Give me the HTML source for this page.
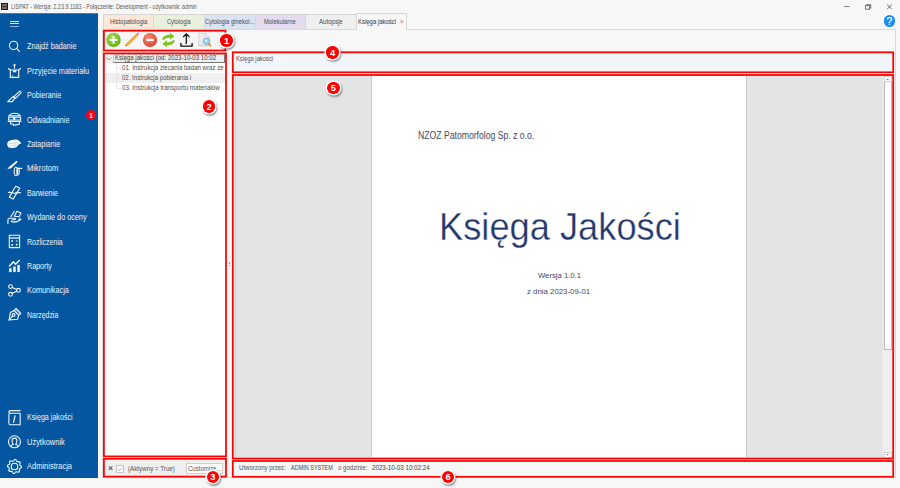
<!DOCTYPE html>
<html><head><meta charset="utf-8">
<style>
*{margin:0;padding:0;box-sizing:border-box}
html,body{width:900px;height:488px;overflow:hidden;background:#f7f7f7;position:relative;font-family:"Liberation Sans",sans-serif}
.r{position:absolute}
.t{position:absolute;white-space:nowrap;transform-origin:0 0}
.bd{border-radius:50%;background:#f00;box-shadow:0 0 0 1.6px #fff,0.9px 1.4px 2px 1.4px rgba(0,0,0,.45)}
</style></head><body>
<div class="r" style="left:0;top:0;width:900px;height:13px;background:#f7f7f7"></div>
<div class="r" style="left:1px;top:3px;width:7px;height:7px;background:#1c1c1c"></div>
<div class="r" style="left:2px;top:4px;width:5px;height:2px;background:#8a8a8a;opacity:.75"></div>
<div class="r" style="left:2px;top:6px;width:5px;height:1px;background:#4a3a20"></div>
<div class="r" style="left:2px;top:7px;width:5px;height:2px;background:#8a8a8a;opacity:.75"></div>
<div class="t" style="left:11px;top:2.54px;font-size:6.8px;line-height:8px;color:#5a5a5a;font-weight:normal;transform:scaleX(0.7970);">LISPAT - Wersja: 2.23.9.1183 - Połączenie: Development - użytkownik: admin</div>
<svg class="r" style="left:840px;top:0" width="60" height="14"><line x1="4" y1="6.5" x2="9.5" y2="6.5" stroke="#777" stroke-width="0.9"/><rect x="25.6" y="5.6" width="3.9" height="3.6" fill="none" stroke="#666" stroke-width="0.9"/><path d="M26.8 5.6V4.6h4v3.6h-1.3" fill="none" stroke="#666" stroke-width="0.9"/><path d="M47.2 4.5l4.6 4.6M51.8 4.5l-4.6 4.6" stroke="#555" stroke-width="0.9"/></svg>
<div class="r" style="left:0;top:13px;width:98px;height:465px;background:#03569f"></div>
<div class="r" style="left:0;top:13px;width:98px;height:1px;background:#3d7fba"></div>
<div class="r" style="left:10px;top:21px;width:9px;height:1px;background:#dbe7f3"></div>
<div class="r" style="left:10px;top:23px;width:9px;height:1px;background:#dbe7f3"></div>
<div class="r" style="left:10px;top:26px;width:9px;height:1px;background:#8db3d9"></div>
<div class="t" style="left:27px;top:41.22px;font-size:8.3px;line-height:10px;color:#eef3f9;font-weight:normal;transform:scaleX(0.8723);">Znajdź badanie</div>
<div class="t" style="left:27px;top:66.02px;font-size:8.3px;line-height:10px;color:#eef3f9;font-weight:normal;transform:scaleX(0.8844);">Przyjęcie materiału</div>
<div class="t" style="left:27px;top:90.12px;font-size:8.3px;line-height:10px;color:#eef3f9;font-weight:normal;transform:scaleX(0.8609);">Pobieranie</div>
<div class="t" style="left:27px;top:114.72px;font-size:8.3px;line-height:10px;color:#eef3f9;font-weight:normal;transform:scaleX(0.8759);">Odwadnianie</div>
<div class="t" style="left:27px;top:139.12px;font-size:8.3px;line-height:10px;color:#eef3f9;font-weight:normal;transform:scaleX(0.8573);">Zatapianie</div>
<div class="t" style="left:27px;top:163.42px;font-size:8.3px;line-height:10px;color:#eef3f9;font-weight:normal;transform:scaleX(0.9184);">Mikrotom</div>
<div class="t" style="left:27px;top:187.92px;font-size:8.3px;line-height:10px;color:#eef3f9;font-weight:normal;transform:scaleX(0.8514);">Barwienie</div>
<div class="t" style="left:27px;top:212.12px;font-size:8.3px;line-height:10px;color:#eef3f9;font-weight:normal;transform:scaleX(0.8727);">Wydanie do oceny</div>
<div class="t" style="left:27px;top:236.72px;font-size:8.3px;line-height:10px;color:#eef3f9;font-weight:normal;transform:scaleX(0.8424);">Rozliczenia</div>
<div class="t" style="left:27px;top:260.92px;font-size:8.3px;line-height:10px;color:#eef3f9;font-weight:normal;transform:scaleX(0.8580);">Raporty</div>
<div class="t" style="left:27px;top:285.22px;font-size:8.3px;line-height:10px;color:#eef3f9;font-weight:normal;transform:scaleX(0.8818);">Komunikacja</div>
<div class="t" style="left:27px;top:309.72px;font-size:8.3px;line-height:10px;color:#eef3f9;font-weight:normal;transform:scaleX(0.8375);">Narzędzia</div>
<div class="t" style="left:27px;top:412.32px;font-size:8.3px;line-height:10px;color:#eef3f9;font-weight:normal;transform:scaleX(0.8604);">Księga jakości</div>
<div class="t" style="left:27px;top:436.72px;font-size:8.3px;line-height:10px;color:#eef3f9;font-weight:normal;transform:scaleX(0.9005);">Użytkownik</div>
<div class="t" style="left:27px;top:461.12px;font-size:8.3px;line-height:10px;color:#eef3f9;font-weight:normal;transform:scaleX(0.9044);">Administracja</div>
<svg class="r" style="left:0;top:0" width="98" height="488"><circle cx="13.6" cy="45.4" r="4.1" fill="none" stroke="#f2f6fa" stroke-width="1.1" stroke-linecap="round" stroke-linejoin="round"/><path d="M16.6 48.4l2.9 3" fill="none" stroke="#f2f6fa" stroke-width="1.1" stroke-linecap="round" stroke-linejoin="round"/><path d="M14.5 68.3v-3.5" fill="none" stroke="#f2f6fa" stroke-width="1.1" stroke-linecap="round" stroke-linejoin="round"/><path d="M12.8 65.6l1.7-2.2 1.7 2.2z" fill="#f2f6fa"/><rect x="10.3" y="70" width="8.4" height="7.4" fill="none" stroke="#f2f6fa" stroke-width="1.1" stroke-linecap="round" stroke-linejoin="round"/><path d="M10.3 70l-1.9-1.5M18.7 70l1.9-1.5" fill="none" stroke="#f2f6fa" stroke-width="1.1" stroke-linecap="round" stroke-linejoin="round"/><rect x="13" y="70.3" width="3.3" height="2" fill="#f2f6fa"/><path d="M12.4 75v1.5" stroke="#f2f6fa" stroke-width="0.7"/><path d="M7.7 101.6l5.6-5.3 1.6 1.6-2.6 3.7z" fill="none" stroke="#f2f6fa" stroke-width="1.1" stroke-linecap="round" stroke-linejoin="round"/><path d="M13.8 96.8l5.4-5.2a1.15 1.15 0 0 1 1.6 1.6l-5.4 5.2z" fill="none" stroke="#f2f6fa" stroke-width="1.1" stroke-linecap="round" stroke-linejoin="round"/><path d="M8.6 115.8h12M9.6 115.5c.3-1.5 1.5-2.2 5-2.2s4.7.7 5 2.2" fill="none" stroke="#f2f6fa" stroke-width="1.1" stroke-linecap="round" stroke-linejoin="round"/><rect x="8.6" y="117.1" width="12" height="2.9" fill="none" stroke="#f2f6fa" stroke-width="1.1" stroke-linecap="round" stroke-linejoin="round"/><rect x="13" y="117.3" width="2.4" height="2.5" fill="#f2f6fa"/><path d="M8.2 121.4h12.8" fill="none" stroke="#f2f6fa" stroke-width="1.1" stroke-linecap="round" stroke-linejoin="round"/><path d="M10.6 121.4v2.6h2.8v1.4l5.9-1.2v-2.8" fill="none" stroke="#f2f6fa" stroke-width="1.1" stroke-linecap="round" stroke-linejoin="round"/><path d="M7.2 143.5c.4-2.2 2.5-3.2 5-3.5l2.5-.4c2.2-.2 3.5.4 4.5 1.4l2.3 2.2-2.8 1.3c-.8 2-2.8 3.3-6 3.6-3 .3-5.7-.6-5.5-4.6z" fill="#f2f6fa"/><path d="M9 143.8c2-.4 5-.5 8.5-.8M10.5 146c2-.2 4-.6 6-1.2" stroke="#9fc0e0" stroke-width="0.5" fill="none"/><path d="M7.3 169.3l1.6-2.4 7.3-6a1 1 0 0 1 1.2 1.4l-6.3 5.9z" fill="#f2f6fa"/><ellipse cx="15.9" cy="171.5" rx="1.7" ry="4.2" fill="none" stroke="#f2f6fa" stroke-width="1.1" stroke-linecap="round" stroke-linejoin="round"/><ellipse cx="18.0" cy="171.5" rx="1.2" ry="3.5" fill="none" stroke="#f2f6fa" stroke-width="1.1" stroke-linecap="round" stroke-linejoin="round"/><path d="M18.3 168.4h3.5" fill="none" stroke="#f2f6fa" stroke-width="1.1" stroke-linecap="round" stroke-linejoin="round"/><path d="M15.7 186.3l4 1.8-6.6 11-3.8-2z" fill="none" stroke="#f2f6fa" stroke-width="1.1" stroke-linecap="round" stroke-linejoin="round"/><path d="M8.3 192.4c1.4-.8 2-.2 3.4.4 1.5.6 3 .5 4.6.1 1.5-.4 2.6-.5 4.3-.1" fill="none" stroke="#f2f6fa" stroke-width="1.1" stroke-linecap="round" stroke-linejoin="round"/><path d="M10.8 216.6l3.6-5.3" fill="none" stroke="#f2f6fa" stroke-width="1.1" stroke-linecap="round" stroke-linejoin="round"/><path d="M16.9 211.3l4 1.8-1.7 3.6-4.8-.4z" fill="none" stroke="#f2f6fa" stroke-width="1.1" stroke-linecap="round" stroke-linejoin="round"/><path d="M7.9 223.6v-3.6c0-1 .8-1.7 2-1.7h4.8c1 0 1 1.4.1 1.5h-2.5M11 221c2.5 1.8 5.3 1.3 8.5-.4l1.4-1.3c-.5-.5-1.2-.5-2 0" fill="none" stroke="#f2f6fa" stroke-width="1.1" stroke-linecap="round" stroke-linejoin="round"/><rect x="9.3" y="235.3" width="10.3" height="12.3" fill="none" stroke="#f2f6fa" stroke-width="1.1" stroke-linecap="round" stroke-linejoin="round"/><rect x="9.8" y="237.1" width="9.3" height="1.9" fill="#9fc0e0"/><circle cx="12.2" cy="241" r="0.9" fill="#f2f6fa"/><path d="M15.8 241h1.9" stroke="#f2f6fa" stroke-width="1"/><rect x="11.3" y="244.1" width="1.7" height="1.7" fill="#f2f6fa"/><path d="M16.7 243.7v2M15.7 244.7h2" stroke="#f2f6fa" stroke-width="0.9"/><rect x="9.1" y="268.2" width="2.5" height="3.9" fill="#f2f6fa"/><rect x="13.2" y="266.5" width="2.5" height="5.6" fill="#f2f6fa"/><rect x="17.3" y="264.9" width="2.5" height="7.2" fill="#f2f6fa"/><path d="M9.5 266l3.9-4.2 2.1 2.4 3.8-3.7" fill="none" stroke="#f2f6fa" stroke-width="1.5" stroke-linecap="round" stroke-linejoin="round"/><circle cx="10.5" cy="286.6" r="1.9" fill="none" stroke="#f2f6fa" stroke-width="1.1" stroke-linecap="round" stroke-linejoin="round"/><circle cx="10.5" cy="294.3" r="1.9" fill="none" stroke="#f2f6fa" stroke-width="1.1" stroke-linecap="round" stroke-linejoin="round"/><circle cx="18.4" cy="290.3" r="1.9" fill="none" stroke="#f2f6fa" stroke-width="1.1" stroke-linecap="round" stroke-linejoin="round"/><path d="M12.2 287.5l4.5 2M12.2 293.3l4.5-2.1" fill="none" stroke="#f2f6fa" stroke-width="1.1" stroke-linecap="round" stroke-linejoin="round"/><path d="M9.1 320l1.3-7.6 3.6-1.9 4.7 4.9-1.1 3.8z" fill="none" stroke="#f2f6fa" stroke-width="1.1" stroke-linecap="round" stroke-linejoin="round"/><path d="M14 310.6l2.1-2.1 4.7 4.8-2.1 2.1" fill="none" stroke="#f2f6fa" stroke-width="1.1" stroke-linecap="round" stroke-linejoin="round"/><path d="M15.2 309.5l4.6 4.8" stroke="#f2f6fa" stroke-width="0.7"/><circle cx="13.6" cy="315" r="1.4" fill="none" stroke="#f2f6fa" stroke-width="1.1" stroke-linecap="round" stroke-linejoin="round"/><path d="M9.1 320l3.4-3.9" fill="none" stroke="#f2f6fa" stroke-width="1.1" stroke-linecap="round" stroke-linejoin="round"/><path d="M20.2 413.3H10.4c-1 0-1.5.7-1.5 1.5v8.5c0 .9.6 1.5 1.5 1.5h9.8z" fill="none" stroke="#f2f6fa" stroke-width="1.1" stroke-linecap="round" stroke-linejoin="round"/><path d="M10.4 413.3c-1 0-1.5-.5-1.5-1.3s.5-1.4 1.5-1.4h9.8" fill="none" stroke="#f2f6fa" stroke-width="1.1" stroke-linecap="round" stroke-linejoin="round"/><path d="M15.1 415.8l-1.6 6.5" stroke="#f2f6fa" stroke-width="1.2" stroke-linecap="round"/><circle cx="14.5" cy="441.8" r="6" fill="none" stroke="#f2f6fa" stroke-width="1.1" stroke-linecap="round" stroke-linejoin="round"/><path d="M10.6 446.5c.6-1.6 2-1.6 2.8-2.1-1-1-1.3-2.5-1.3-3.7 0-1.6 1-2.6 2.4-2.6s2.4 1 2.4 2.6c0 1.2-.3 2.7-1.3 3.7.8.5 2.2.5 2.8 2.1" fill="none" stroke="#f2f6fa" stroke-width="1.1" stroke-linecap="round" stroke-linejoin="round"/><path d="M14.50 459.50 L15.87 459.63 L16.64 461.33 L17.61 461.84 L19.45 461.55 L20.32 462.61 L19.67 464.36 L19.99 465.41 L21.50 466.50 L21.37 467.87 L19.67 468.64 L19.16 469.61 L19.45 471.45 L18.39 472.32 L16.64 471.67 L15.59 471.99 L14.50 473.50 L13.13 473.37 L12.36 471.67 L11.39 471.16 L9.55 471.45 L8.68 470.39 L9.33 468.64 L9.01 467.59 L7.50 466.50 L7.63 465.13 L9.33 464.36 L9.84 463.39 L9.55 461.55 L10.61 460.68 L12.36 461.33 L13.41 461.01Z" fill="none" stroke="#f2f6fa" stroke-width="1.1" stroke-linecap="round" stroke-linejoin="round"/><circle cx="14.5" cy="466.5" r="3.3" fill="none" stroke="#f2f6fa" stroke-width="1.1" stroke-linecap="round" stroke-linejoin="round"/></svg>
<div class="r" style="left:85.9px;top:110.3px;width:10px;height:10px;border-radius:50%;background:#fa0010"></div>
<div class="t" style="left:89.3px;top:111.72px;font-size:6.3px;line-height:8px;color:#fff;font-weight:bold;">1</div>
<div class="r" style="left:98px;top:13px;width:802px;height:475px;background:#f7f7f7"></div>
<div class="r" style="left:102px;top:29px;width:794px;height:449px;border:1px solid #d9d9d9;background:#f7f7f7"></div>
<div class="r" style="left:883.5px;top:15.4px;width:11.8px;height:11.8px;border-radius:50%;background:#1a8cf5"></div>
<div class="t" style="left:886.5px;top:14.83px;font-size:10.3px;line-height:13px;color:#fff;font-weight:normal;-webkit-text-stroke:0.2px #fff;">?</div>
<div class="r" style="left:103px;top:14px;width:50px;height:15px;background:#fbe8da;border-left:1px solid #d6d6d6;border-top:1px solid #d6d6d6"></div>
<div class="r" style="left:153px;top:14px;width:51px;height:15px;background:#e9f0dc;border-left:1px solid #d6d6d6;border-top:1px solid #d6d6d6"></div>
<div class="r" style="left:204px;top:14px;width:51px;height:15px;background:#d9e4f2;border-left:1px solid #d6d6d6;border-top:1px solid #d6d6d6"></div>
<div class="r" style="left:255px;top:14px;width:50px;height:15px;background:#e4dcee;border-left:1px solid #d6d6d6;border-top:1px solid #d6d6d6"></div>
<div class="r" style="left:305px;top:14px;width:51px;height:15px;background:#efefef;border-left:1px solid #d6d6d6;border-top:1px solid #d6d6d6"></div>
<div class="t" style="left:109.8px;top:17.61px;font-size:6.6px;line-height:8px;color:#4a4a4a;font-weight:normal;transform:scaleX(0.8912);">Histopatologia</div>
<div class="t" style="left:166.7px;top:17.61px;font-size:6.6px;line-height:8px;color:#4a4a4a;font-weight:normal;transform:scaleX(0.8655);">Cytologia</div>
<div class="t" style="left:204.5px;top:17.61px;font-size:6.6px;line-height:8px;color:#4a4a4a;font-weight:normal;transform:scaleX(0.8861);">Cytologia ginekol...</div>
<div class="t" style="left:264px;top:17.61px;font-size:6.6px;line-height:8px;color:#4a4a4a;font-weight:normal;transform:scaleX(0.8848);">Molekularne</div>
<div class="t" style="left:319px;top:17.61px;font-size:6.6px;line-height:8px;color:#4a4a4a;font-weight:normal;transform:scaleX(0.9231);">Autopsje</div>
<div class="r" style="left:356px;top:13px;width:51px;height:17px;background:#f7f7f7;border:1px solid #d6d6d6;border-bottom:none"></div>
<div class="t" style="left:358px;top:17.71px;font-size:6.6px;line-height:8px;color:#333;font-weight:normal;transform:scaleX(0.9025);">Księga jakości</div>
<div class="t" style="left:399.8px;top:17.07px;font-size:7px;line-height:9px;color:#888;font-weight:normal;">×</div>
<div class="r" style="left:103px;top:30px;width:123px;height:21px;background:#f6f6f6"></div>
<svg class="r" style="left:100px;top:28px" width="120" height="24"><defs><radialGradient id="gg" cx="40%" cy="35%" r="70%"><stop offset="0" stop-color="#a6e04a"/><stop offset="1" stop-color="#5fae12"/></radialGradient><radialGradient id="rg" cx="40%" cy="35%" r="70%"><stop offset="0" stop-color="#f68a76"/><stop offset="1" stop-color="#d8432c"/></radialGradient></defs><circle cx="13.5" cy="11.9" r="7.2" fill="url(#gg)"/><path d="M13.5 8v7.8M9.6 11.9h7.8" stroke="#fff" stroke-width="2"/><path d="M25.6 18.1l.9-2.6 9.9-9.8 1.7 1.7-9.9 9.8z" fill="#f4ae3e" stroke="#d08a22" stroke-width="0.4"/><path d="M36.4 5.7l1-1a1 1 0 0 1 1.4 0l.3.3a1 1 0 0 1 0 1.4l-1 1z" fill="#d895d8"/><path d="M25.6 18.1l.45-1.4 1 1z" fill="#555"/><circle cx="50" cy="12" r="7.1" fill="url(#rg)"/><path d="M46.3 12h7.4" stroke="#fff" stroke-width="2.2"/><path d="M62 11.5c1-3 4-5 8-4.8l-.3-2 4.8 3.4-4.3 3.6v-2c-3-.3-5.5.8-6.5 2.2z" fill="#7ec41e"/><path d="M75 12.5c-1 3-4 5-8 4.8l.3 2-4.8-3.4 4.3-3.6v2c3 .3 5.5-.8 6.5-2.2z" fill="#7ec41e"/><path d="M86.3 16V6M83.2 9l3.1-3.1 3.1 3.1" fill="none" stroke="#111" stroke-width="1.3"/><path d="M80.9 15v3.2h11.2V15" fill="none" stroke="#111" stroke-width="1.3" stroke-linejoin="round"/><defs><linearGradient id="dg" x1="0" y1="0" x2="1" y2="1"><stop offset="0" stop-color="#f4f4f4"/><stop offset="1" stop-color="#d9d9d9"/></linearGradient></defs><path d="M98.7 5.4h7.3l3.4 3.4v9.2H98.7z" fill="url(#dg)" stroke="#c4c4c4" stroke-width="0.6"/><path d="M106 5.4v3.4h3.4" fill="#fff" stroke="#c4c4c4" stroke-width="0.6"/><path d="M108.7 15.6l1.8 1.9" stroke="#e8901c" stroke-width="1.8" stroke-linecap="round"/><circle cx="106.6" cy="13.3" r="3.1" fill="#a9d6f5" stroke="#6aa7d6" stroke-width="0.9"/><circle cx="105.8" cy="12.4" r="1" fill="#e6f4fd"/></svg>
<div class="r" style="left:103px;top:52px;width:124px;height:405px;background:#fff"></div>
<div class="r" style="left:105px;top:54px;width:8px;height:9px;background:#efefef"></div>
<svg class="r" style="left:105px;top:54px" width="8" height="9"><path d="M1.5 3.5l2.5 2.5 2.5-2.5" fill="none" stroke="#888" stroke-width="0.8"/></svg>
<div class="r" style="left:113px;top:54px;width:112px;height:9px;background:#efefef;border:1px solid #c8c8c8;border-right-color:#777;border-bottom-color:#777"></div>
<div class="r" style="left:105px;top:73px;width:120px;height:10px;background:#efefef"></div>
<div class="r" style="left:116px;top:63px;width:0;height:25px;border-left:1px solid #e6e6e6"></div>
<div class="r" style="left:117px;top:68px;width:4px;height:0;border-top:1px solid #e6e6e6"></div>
<div class="r" style="left:117px;top:78px;width:4px;height:0;border-top:1px solid #e6e6e6"></div>
<div class="r" style="left:117px;top:88px;width:4px;height:0;border-top:1px solid #e6e6e6"></div>
<div class="t" style="left:114.5px;top:53.58px;font-size:6.4px;line-height:8px;color:#3a3a3a;font-weight:normal;transform:scaleX(0.9544);">Księga jakości (od: 2023-10-03 10:02</div>
<div class="t" style="left:122.4px;top:63.68px;font-size:6.4px;line-height:8px;color:#4d4d4d;font-weight:normal;transform:scaleX(0.9532);">01. Instrukcja zlecania badań wraz ze</div>
<div class="t" style="left:122.4px;top:73.78px;font-size:6.4px;line-height:8px;color:#4d4d4d;font-weight:normal;transform:scaleX(0.9495);">02. Instrukcja pobierania i</div>
<div class="t" style="left:122.4px;top:83.88px;font-size:6.4px;line-height:8px;color:#4d4d4d;font-weight:normal;transform:scaleX(0.9648);">03. Instrukcja transportu materiałów</div>
<div class="r" style="left:103px;top:458px;width:124px;height:19px;background:#efefef"></div>
<svg class="r" style="left:105px;top:460px" width="30" height="16"><path d="M3.9 6.3l3.5 3.5M7.4 6.3l-3.5 3.5" stroke="#666" stroke-width="1.2"/></svg>
<div class="r" style="left:116px;top:464.5px;width:8px;height:8px;background:#fff;border:1px solid #c6c6c6"></div>
<svg class="r" style="left:116px;top:464.5px" width="8" height="8"><path d="M1.8 4l1.7 1.8 3-3.2" fill="none" stroke="#999" stroke-width="0.8"/></svg>
<div class="t" style="left:128px;top:464.71px;font-size:6.6px;line-height:8px;color:#555;font-weight:normal;transform:scaleX(0.9443);">(Aktywny = True)</div>
<div class="r" style="left:186px;top:463px;width:37px;height:11px;background:#fff;border:1px solid #d0d0d0"></div>
<div class="t" style="left:188px;top:464.71px;font-size:6.6px;line-height:8px;color:#555;font-weight:normal;transform:scaleX(0.9143);">Customize...</div>
<div class="r" style="left:227px;top:51px;width:5px;height:426px;background:#f9f9f9"></div>
<div class="r" style="left:229px;top:262px;width:1px;height:4px;border-left:1px dotted #999"></div>
<div class="r" style="left:232px;top:52px;width:662px;height:21px;background:#f2f5fa"></div>
<div class="t" style="left:235.9px;top:54.68px;font-size:6.4px;line-height:8px;color:#555;font-weight:normal;transform:scaleX(0.9078);">Księga jakości</div>
<div class="r" style="left:232px;top:74px;width:662px;height:385px;background:#e4e4e4"></div>
<div class="r" style="left:234px;top:76px;width:1px;height:381px;background:#eeeeee"></div>
<div class="r" style="left:235px;top:76px;width:1px;height:381px;background:#d6d6d6"></div>
<div class="r" style="left:371px;top:76px;width:1px;height:381px;background:#c8c8c8"></div>
<div class="r" style="left:372px;top:76px;width:374px;height:381px;background:#fff"></div>
<div class="r" style="left:746px;top:76px;width:1px;height:381px;background:#c8c8c8"></div>
<div class="r" style="left:883px;top:76px;width:9px;height:381px;background:#efefef"></div>
<div class="r" style="left:883.5px;top:81px;width:8px;height:269px;background:#fff;border:1px solid #b8b8b8"></div>
<div class="r" style="left:883.5px;top:75.5px;width:8px;height:6px;background:#fff;border:1px solid #d0d0d0"></div>
<div class="r" style="left:883.5px;top:452px;width:8px;height:6px;background:#fff;border:1px solid #d0d0d0"></div>
<svg class="r" style="left:883px;top:75px" width="9" height="384"><path d="M3 5l1.5-1.5L6 5z" fill="#888"/><path d="M3 379l1.5 1.5L6 379z" fill="#888"/></svg>
<div class="t" style="left:417.8px;top:129.53px;font-size:10.0px;line-height:12px;color:#3b4a6b;font-weight:normal;transform:scaleX(0.8640);">NZOZ Patomorfolog Sp. z o.o.</div>
<div class="t" style="left:439.0px;top:202.41px;font-size:39.5px;line-height:49px;color:#22376b;font-weight:normal;transform:scaleX(0.9181);-webkit-text-stroke:0.35px #fff;">Księga Jakości</div>
<div class="t" style="left:537.7px;top:270.63px;font-size:7.7px;line-height:10px;color:#3b4a6b;font-weight:normal;transform:scaleX(1.0005);">Wersja 1.0.1</div>
<div class="t" style="left:527.3px;top:286.93px;font-size:7.7px;line-height:10px;color:#3b4a6b;font-weight:normal;transform:scaleX(1.0179);">z dnia 2023-09-01</div>
<div class="r" style="left:232px;top:460px;width:662px;height:18px;background:#f7f7f7"></div>
<div class="t" style="left:239.1px;top:464.12px;font-size:6.3px;line-height:8px;color:#555;font-weight:normal;transform:scaleX(0.9629);">Utworzony przez:</div>
<div class="t" style="left:290.9px;top:464.12px;font-size:6.3px;line-height:8px;color:#444;font-weight:normal;transform:scaleX(0.8720);">ADMIN SYSTEM</div>
<div class="t" style="left:337.6px;top:464.12px;font-size:6.3px;line-height:8px;color:#555;font-weight:normal;transform:scaleX(0.9676);">o godzinie:</div>
<div class="t" style="left:371.6px;top:464.12px;font-size:6.3px;line-height:8px;color:#444;font-weight:normal;transform:scaleX(0.9852);">2023-10-03 10:02:24</div>
<svg class="r" style="left:0;top:0" width="900" height="488"><rect x="103.9" y="30.7" width="121.60" height="19.80" fill="none" stroke="#ff0000" stroke-width="1.75"/><rect x="103.9" y="53.4" width="122.10" height="403.00" fill="none" stroke="#ff0000" stroke-width="1.75"/><rect x="103.9" y="458.8" width="122.10" height="17.80" fill="none" stroke="#ff0000" stroke-width="1.75"/><rect x="232.8" y="52.3" width="660.40" height="20.00" fill="none" stroke="#ff0000" stroke-width="1.75"/><rect x="232.8" y="75.0" width="660.40" height="383.60" fill="none" stroke="#ff0000" stroke-width="1.75"/><rect x="232.8" y="461.0" width="660.40" height="15.80" fill="none" stroke="#ff0000" stroke-width="1.75"/></svg>
<div class="r bd" style="left:220.30px;top:34.40px;width:12.40px;height:12.40px"></div><div class="t" style="left:223.9px;top:34.73px;font-size:9.3px;line-height:12px;color:#fff;font-weight:bold;">1</div>
<div class="r bd" style="left:202.80px;top:100.40px;width:12.40px;height:12.40px"></div><div class="t" style="left:206.4px;top:100.73px;font-size:9.3px;line-height:12px;color:#fff;font-weight:bold;">2</div>
<div class="r bd" style="left:206.60px;top:471.00px;width:12.40px;height:12.40px"></div><div class="t" style="left:210.20000000000002px;top:471.33px;font-size:9.3px;line-height:12px;color:#fff;font-weight:bold;">3</div>
<div class="r bd" style="left:326.30px;top:46.30px;width:12.40px;height:12.40px"></div><div class="t" style="left:329.9px;top:46.63px;font-size:9.3px;line-height:12px;color:#fff;font-weight:bold;">4</div>
<div class="r bd" style="left:327.20px;top:82.00px;width:12.40px;height:12.40px"></div><div class="t" style="left:330.79999999999995px;top:82.33px;font-size:9.3px;line-height:12px;color:#fff;font-weight:bold;">5</div>
<div class="r bd" style="left:442.00px;top:470.80px;width:12.40px;height:12.40px"></div><div class="t" style="left:445.59999999999997px;top:471.13px;font-size:9.3px;line-height:12px;color:#fff;font-weight:bold;">6</div>
</body></html>
